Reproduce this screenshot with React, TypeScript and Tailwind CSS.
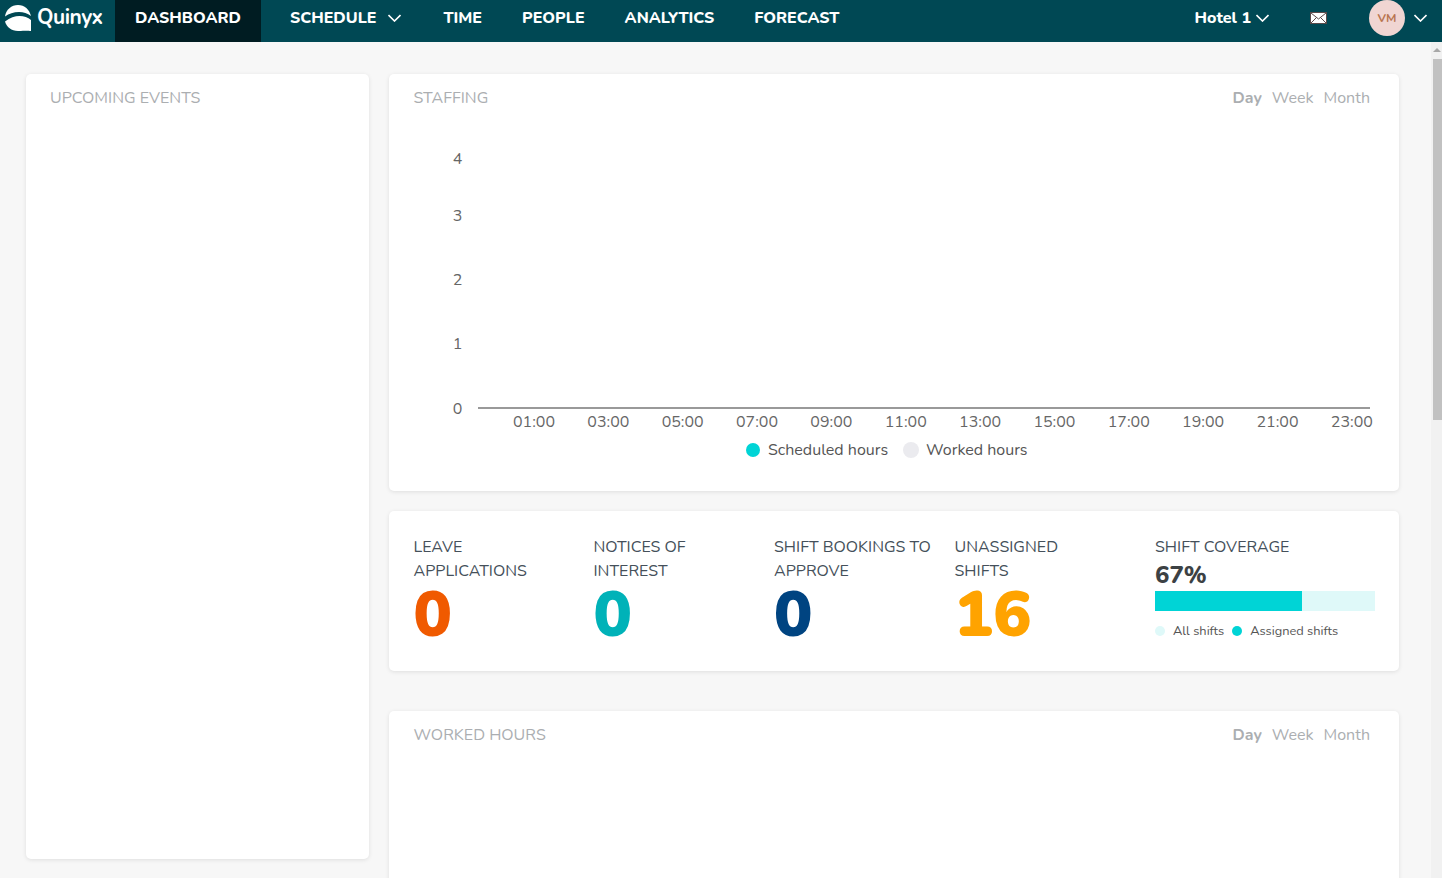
const FONT = "font-['Nunito','Lato','Noto_Sans',sans-serif]";

const navItems = ["TIME", "PEOPLE", "ANALYTICS", "FORECAST"];

const hours = ["01:00", "03:00", "05:00", "07:00", "09:00", "11:00", "13:00", "15:00", "17:00", "19:00", "21:00", "23:00"];

const yTicks = [
  { label: "4", y: 159 },
  { label: "3", y: 216 },
  { label: "2", y: 280 },
  { label: "1", y: 344 },
  { label: "0", y: 409 },
];

const stats = [
  { top: "LEAVE", bottom: "APPLICATIONS", value: "0", color: "text-[#f05a00]", w: "w-[180px]" },
  { top: "NOTICES OF", bottom: "INTEREST", value: "0", color: "text-[#00b2b8]", w: "w-[180.500px]" },
  { top: "SHIFT BOOKINGS TO", bottom: "APPROVE", value: "0", color: "text-[#004481]", w: "w-[180.500px]" },
  { top: "UNASSIGNED", bottom: "SHIFTS", value: "16", color: "text-[#ffa300]", w: "w-[200.500px]" },
];

const Logo = () => (
  <svg width="28" height="28" viewBox="0 0 28 28" className="shrink-0">
    <path d="M1 12.500C2 5.500 7.500 1 14 1c6.500 0 11.500 4.500 13 11-3.500-2.500-7.500-4-12-4-5.500 0-10 1.500-14 4.500Z" fill="#fff" />
    <path d="M1 17.500C6 13.500 11 12 15.500 12c4.500 0 8.500 1.500 11.500 4v11c-3-.5-5-.5-13 0-6.500 0-11.500-4-13-9.500Z" fill="#fff" />
  </svg>
);

const Chevron = ({ className }: { className: string }) => (
  <svg width="13" height="8" viewBox="0 0 13 8" fill="none" stroke="#fff" strokeWidth="1.600" className={`shrink-0 ${className}`}>
    <path d="M0.500 1l6 6 6-6" />
  </svg>
);

const RangeTabs = () => (
  <div className="flex gap-[10px] text-[16px] leading-[20px] text-[#abaeb1]">
    <span className="font-bold">Day</span>
    <span>Week</span>
    <span>Month</span>
  </div>
);

const Card = ({ className, children }: { className: string; children: React.ReactNode }) => (
  <div className={`bg-white rounded-[5px] shadow-[0_1px_4px_rgba(0,0,0,0.1)] ${className}`}>{children}</div>
);

export default function App() {
  return (
    <div className={`${FONT} relative h-[878px] w-[1442px] overflow-hidden bg-[#f7f7f7]`}>
      <header className="flex h-[42px] items-center bg-[#004854] pb-[6px] text-white">
        <div className="flex w-[115px] items-center pl-[4px]">
          <Logo />
          <span className="ml-[5px] text-[21px] font-bold tracking-[-0.5px]">Quinyx</span>
        </div>
        <div className="flex h-[42px] w-[146px] items-center justify-center self-start bg-[#001c22] pb-[6px] text-[16px] font-extrabold">DASHBOARD</div>
        <div className="ml-[29px] flex items-center text-[16px] font-extrabold">
          SCHEDULE
          <Chevron className="ml-[12px]" />
        </div>
        <div className="ml-[42px] flex gap-[40px] text-[16px] font-extrabold">
          {navItems.map((n) => (
            <div key={n}>{n}</div>
          ))}
        </div>
        <div className="ml-auto flex items-center text-[16px] font-extrabold">
          Hotel 1
          <Chevron className="ml-[5px]" />
        </div>
        <svg width="17" height="12" viewBox="0 0 17 12" className="ml-[41px]">
          <rect x="0.500" y="0.500" width="16" height="11" fill="#fff" stroke="#5a4a4a" strokeWidth="1" />
          <path d="M1 1l7.500 6L16 1M1 11l5.500-5.500M16 11l-5.500-5.500" fill="none" stroke="#5a4a4a" strokeWidth="1" />
        </svg>
        <div className="ml-[42px] flex h-[36px] w-[36px] items-center justify-center rounded-full bg-[#f0d5d2] text-[12px] font-bold text-[#b8744f]">VM</div>
        <Chevron className="ml-[9px] mr-[15px]" />
      </header>

      <main className="flex gap-[20px] pl-[26px] pt-[32px]">
        <Card className="h-[785px] w-[343px] px-[24px] pt-[14px]">
          <div className="text-[16px] leading-[20px] text-[#abaeb1]">UPCOMING EVENTS</div>
        </Card>

        <div className="flex w-[1010px] flex-col">
          <Card className="h-[417px] pl-[24.500px] pr-[24px] pt-[14px]">
            <div className="flex justify-between pr-[5px]">
              <div className="text-[16px] leading-[20px] text-[#abaeb1]">STAFFING</div>
              <RangeTabs />
            </div>
            <svg width="1010" height="330" viewBox="0 0 1010 330" className="-ml-[24.500px] max-w-none">
              <g transform="translate(0,-108)">
                {yTicks.map((t) => (
                  <text key={t.label} x="68.500" y={t.y + 5} textAnchor="middle" fontSize="16" fill="#666">{t.label}</text>
                ))}
                <line x1="89" x2="981" y1="408" y2="408" stroke="#999" strokeWidth="2" />
                {hours.map((h, i) => (
                  <text key={h} x={145 + i * 74.350} y="427" textAnchor="middle" fontSize="16" fill="#666">{h}</text>
                ))}
              </g>
            </svg>
            <div className="mt-[2px] flex items-center justify-center pr-[15px] text-[16px] leading-[20px] text-[#555]">
              <span className="h-[14px] w-[14px] rounded-full bg-[#00d4d6]" />
              <span className="ml-[8px]">Scheduled hours</span>
              <span className="ml-[15px] h-[16px] w-[16px] rounded-full bg-[#ebebef]" />
              <span className="ml-[7px]">Worked hours</span>
            </div>
          </Card>

          <Card className="mt-[20px] flex h-[160px] pl-[24.500px] pt-[24px]">
            {stats.map((s) => (
              <div key={s.top} className={`${s.w} shrink-0`}>
                <div className="text-[16px] leading-[24px] text-[#45505a]">{s.top}</div>
                <div className="text-[16px] leading-[24px] text-[#45505a]">{s.bottom}</div>
                <div className={`text-[64px] font-black leading-[64px] ${s.color}`}>{s.value}</div>
              </div>
            ))}
            <div className="w-[220px]">
              <div className="text-[16px] leading-[24px] text-[#45505a]">SHIFT COVERAGE</div>
              <div className="text-[24px] font-extrabold leading-[32px] text-[#3c4144]">67%</div>
              <div className="h-[20px] bg-[#dff9f9]">
                <div className="h-full w-[147px] bg-[#00d4d6]" />
              </div>
              <div className="mt-[10px] flex items-center text-[12.800px] leading-[20px] text-[#555]">
                <span className="h-[10px] w-[10px] rounded-full bg-[#dff9f9]" />
                <span className="ml-[8px]">All shifts</span>
                <span className="ml-[8px] h-[10px] w-[10px] rounded-full bg-[#00d4d6]" />
                <span className="ml-[8px]">Assigned shifts</span>
              </div>
            </div>
          </Card>

          <Card className="mt-[40px] h-[300px] pl-[24.500px] pr-[24px] pt-[14px]">
            <div className="flex justify-between pr-[5px]">
              <div className="text-[16px] leading-[20px] text-[#abaeb1]">WORKED HOURS</div>
              <RangeTabs />
            </div>
          </Card>
        </div>
      </main>

      {/* scrollbar */}
      <div className="absolute bottom-0 right-0 top-[42px] w-[11px] bg-[#f1f1f1]">
        <div className="mx-auto mt-[6px] h-0 w-0 border-x-[4px] border-b-[4px] border-x-transparent border-b-[#a8a8a8]" />
        <div className="absolute left-[2px] right-0 top-[17px] h-[361px] bg-[#c1c1c1]" />
      </div>
    </div>
  );
}
